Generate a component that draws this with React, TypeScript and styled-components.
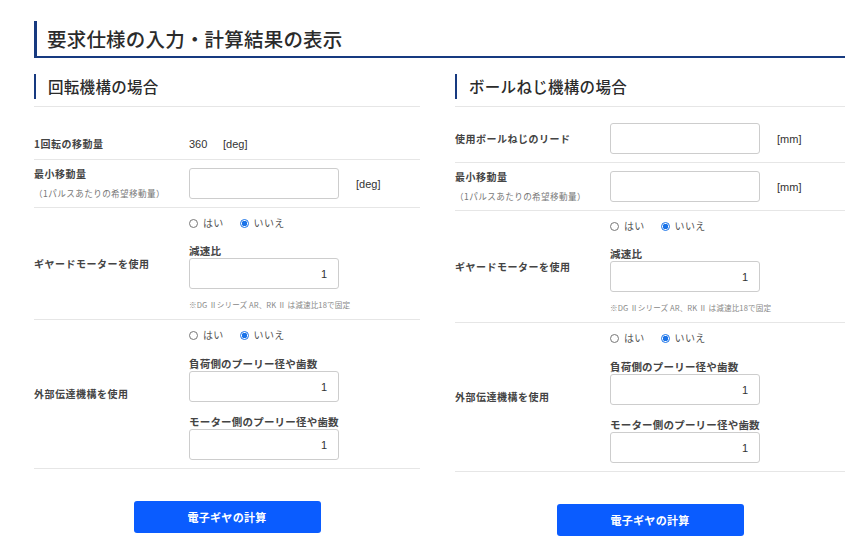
import React from "react";
import styled, { createGlobalStyle } from "styled-components";

const Global = createGlobalStyle`
  html, body { margin: 0; padding: 0; background: #fff; }
  body {
    font-family: "Noto Sans CJK JP", "Noto Sans", "Liberation Sans", sans-serif;
    color: #333;
  }
  * { box-sizing: border-box; }
`;

const Page = styled.div`
  width: 846px;
  padding: 21px 1px 0 34px;
`;

const MainTitle = styled.h1`
  margin: 0;
  height: 37px;
  border-left: 3px solid #173a80;
  border-bottom: 2px solid #173a80;
  padding-left: 10px;
  font-size: 19.5px;
  font-weight: 500;
  line-height: 35px;
  color: #2b2b2b;
  letter-spacing: 0.2px;
`;

const Columns = styled.div`
  display: grid;
  grid-template-columns: 386px 390px;
  column-gap: 35px;
  margin-top: 16px;
`;

const Column = styled.section`
  display: flex;
  flex-direction: column;
`;

const HeadingWrap = styled.div`
  padding-bottom: 7px;
  border-bottom: 1px solid #e6e6e6;
`;

const Heading = styled.h2`
  margin: 0;
  height: 25px;
  border-left: 2px solid #173a80;
  padding-left: 12px;
  font-size: 15.5px;
  font-weight: 500;
  line-height: 25px;
  color: #2b2b2b;
  letter-spacing: 0.3px;
`;

const Table = styled.div`
  margin-top: 8px;
  display: flex;
  flex-direction: column;
`;

const Row = styled.div`
  display: grid;
  grid-template-columns: 155px 1fr;
  align-items: center;
  padding: 8px 0;
  border-bottom: 1px solid #e6e6e6;
`;

const Label = styled.div<{ $top?: number }>`
  font-size: 10px;
  font-weight: 700;
  line-height: 14px;
  letter-spacing: 0.5px;
  color: #444;
  padding-top: ${(p) => p.$top ?? 0}px;
`;

const LabelStack = styled.div`
  margin: -2px 0;
`;

const SubLabel = styled.div`
  font-size: 8.6px;
  font-weight: 400;
  line-height: 14px;
  margin-top: 5px;
  color: #777;
  letter-spacing: 0.4px;
`;

const Value = styled.div<{ $top?: number }>`
  display: flex;
  flex-direction: column;
  align-items: flex-start;
  padding-top: ${(p) => p.$top ?? 0}px;
`;

const Inline = styled.div<{ $h?: number }>`
  display: flex;
  align-items: center;
  height: ${(p) => p.$h ?? 14}px;
  font-family: "Liberation Sans", Arial, sans-serif;
  font-size: 11px;
  color: #333;
`;

const StaticNum = styled.span`
  width: 34px;
`;

const Unit = styled.span`
  margin-left: 17px;
  font-family: "Liberation Sans", Arial, sans-serif;
  font-size: 11px;
  color: #333;
`;

const Input = styled.div`
  width: 150px;
  height: 31px;
  border: 1px solid #cdcdcd;
  border-radius: 3px;
  background: #fff;
  display: flex;
  align-items: center;
  justify-content: flex-end;
  padding-right: 11px;
  font-family: "Liberation Sans", Arial, sans-serif;
  font-size: 11px;
  color: #333;
`;

const RadioGroup = styled.div`
  display: flex;
  align-items: center;
  height: 14px;
  gap: 16px;
`;

const RadioOption = styled.label`
  display: flex;
  align-items: center;
  gap: 5px;
  font-size: 10px;
  line-height: 14px;
  color: #555;
  letter-spacing: 0.3px;
`;

const RadioDot = styled.span<{ $checked?: boolean }>`
  width: 9px;
  height: 9px;
  border-radius: 50%;
  border: 1px solid ${(p) => (p.$checked ? "#1a73e8" : "#777")};
  background: ${(p) =>
    p.$checked ? "radial-gradient(circle, #1a73e8 0 2.6px, #fff 3px)" : "#fff"};
`;

const FieldLabel = styled.div<{ $mt: number }>`
  margin-top: ${(p) => p.$mt}px;
  font-size: 10.5px;
  font-weight: 700;
  line-height: 14px;
  color: #444;
  letter-spacing: 0.2px;
`;

const Note = styled.div`
  margin-top: 10px;
  font-size: 7.6px;
  line-height: 12px;
  color: #888;
  letter-spacing: 0.1px;
`;

const ButtonRow = styled.div`
  display: flex;
  justify-content: center;
  margin-top: 32px;
`;

const Button = styled.button`
  width: 187px;
  height: 32px;
  border: none;
  border-radius: 3px;
  background: #0a5cff;
  color: #fff;
  font-family: "Noto Sans CJK JP", sans-serif;
  font-size: 11px;
  font-weight: 700;
  letter-spacing: 0.3px;
  cursor: pointer;
`;

const Radios = () => (
  <RadioGroup>
    <RadioOption>
      <RadioDot />
      はい
    </RadioOption>
    <RadioOption>
      <RadioDot $checked />
      いいえ
    </RadioOption>
  </RadioGroup>
);

const MinMove = ({ unit }: { unit: string }) => (
  <Row>
    <LabelStack>
      <Label>最小移動量</Label>
      <SubLabel>（1パルスあたりの希望移動量）</SubLabel>
    </LabelStack>
    <Inline $h={31}>
      <Input />
      <Unit>{unit}</Unit>
    </Inline>
  </Row>
);

const GearRow = () => (
  <Row>
    <Label>ギヤードモーターを使用</Label>
    <Value>
      <Radios />
      <FieldLabel $mt={14}>減速比</FieldLabel>
      <Input>1</Input>
      <Note>※DG Ⅱシリーズ AR、RK Ⅱ は減速比18で固定</Note>
    </Value>
  </Row>
);

const ExternalRow = () => (
  <Row>
    <Label>外部伝達機構を使用</Label>
    <Value>
      <Radios />
      <FieldLabel $mt={15}>負荷側のプーリー径や歯数</FieldLabel>
      <Input>1</Input>
      <FieldLabel $mt={13}>モーター側のプーリー径や歯数</FieldLabel>
      <Input>1</Input>
    </Value>
  </Row>
);

export default function App() {
  return (
    <>
      <Global />
      <Page>
        <MainTitle>要求仕様の入力・計算結果の表示</MainTitle>
        <Columns>
          <Column>
            <HeadingWrap>
              <Heading>回転機構の場合</Heading>
            </HeadingWrap>
            <Table>
              <Row>
                <Label $top={14}>1回転の移動量</Label>
                <Value $top={14}>
                  <Inline>
                    <StaticNum>360</StaticNum>
                    <span>[deg]</span>
                  </Inline>
                </Value>
              </Row>
              <MinMove unit="[deg]" />
              <GearRow />
              <ExternalRow />
            </Table>
            <ButtonRow>
              <Button>電子ギヤの計算</Button>
            </ButtonRow>
          </Column>
          <Column>
            <HeadingWrap>
              <Heading>ボールねじ機構の場合</Heading>
            </HeadingWrap>
            <Table>
              <Row>
                <Label>使用ボールねじのリード</Label>
                <Inline $h={31}>
                  <Input />
                  <Unit>[mm]</Unit>
                </Inline>
              </Row>
              <MinMove unit="[mm]" />
              <GearRow />
              <ExternalRow />
            </Table>
            <ButtonRow>
              <Button>電子ギヤの計算</Button>
            </ButtonRow>
          </Column>
        </Columns>
      </Page>
    </>
  );
}
